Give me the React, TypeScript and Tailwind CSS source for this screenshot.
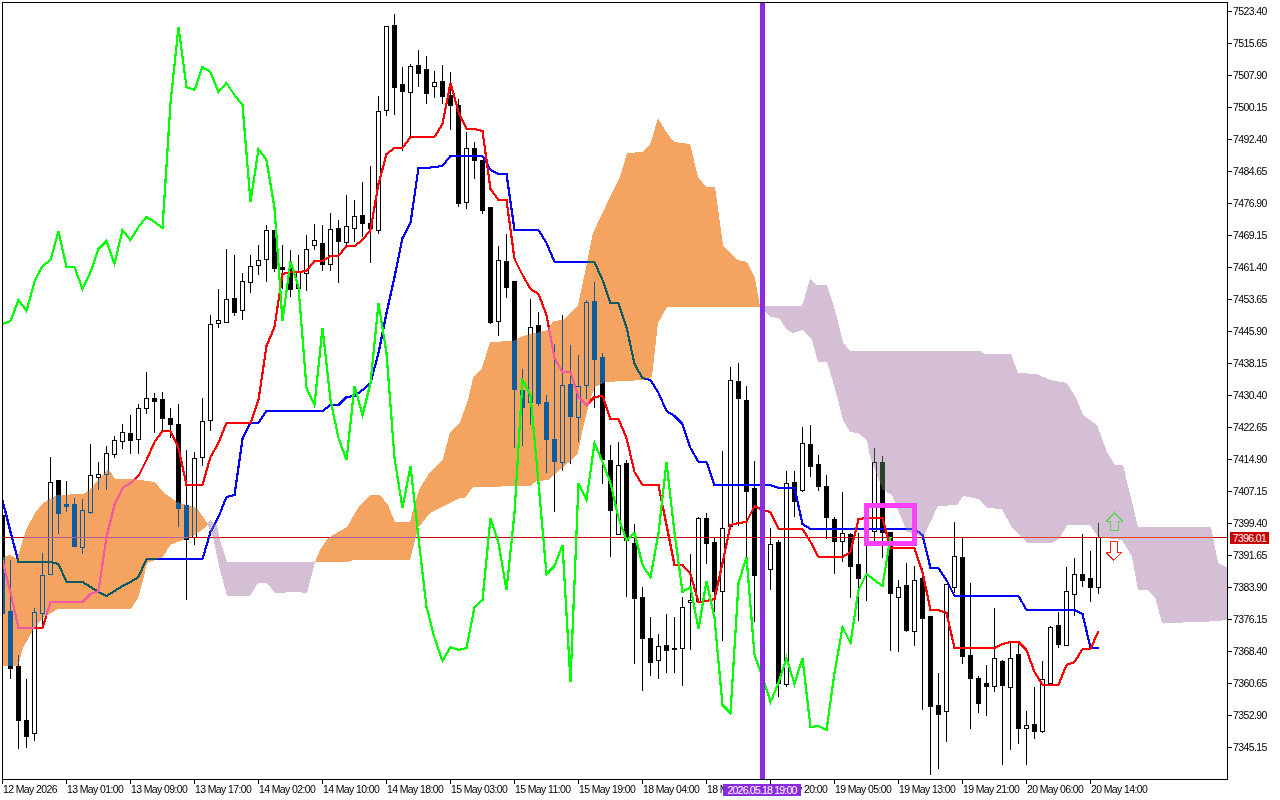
const candles: number[][] = [
  [515, 515, 613, 613, 0], [560, 611, 668, 678, 0], [655, 666, 720, 748, 0], [679, 720, 736, 747, 0],
  [608, 612, 733, 740, 1], [553, 575, 613, 627, 1], [457, 482, 574, 574, 1], [480, 480, 513, 533, 0],
  [481, 504, 506, 511, 0], [498, 504, 546, 546, 0], [499, 510, 547, 553, 1], [444, 475, 512, 513, 1],
  [462, 474, 477, 489, 1], [446, 453, 474, 489, 1], [436, 440, 454, 457, 1], [424, 432, 441, 448, 1],
  [415, 433, 440, 453, 0], [404, 408, 439, 453, 1], [372, 398, 408, 413, 1], [393, 398, 401, 432, 0],
  [392, 399, 418, 432, 0], [408, 418, 424, 437, 0], [404, 424, 508, 526, 0], [450, 505, 539, 599, 0],
  [452, 458, 537, 544, 1], [398, 421, 457, 465, 1], [315, 324, 420, 430, 1], [289, 320, 323, 327, 1],
  [249, 299, 322, 322, 1], [255, 298, 312, 315, 0], [273, 281, 310, 319, 1], [255, 266, 282, 292, 1],
  [245, 260, 265, 274, 1], [225, 230, 259, 281, 1], [230, 230, 268, 271, 0], [245, 267, 269, 288, 0],
  [250, 268, 289, 296, 0], [255, 272, 288, 289, 1], [235, 249, 273, 290, 1], [224, 240, 245, 249, 1],
  [225, 243, 264, 270, 0], [213, 229, 264, 270, 1], [220, 228, 241, 282, 0], [195, 226, 242, 245, 1],
  [200, 216, 228, 241, 1], [182, 215, 223, 236, 0], [166, 223, 228, 262, 0], [96, 111, 230, 233, 1],
  [26, 26, 110, 115, 1], [14, 25, 87, 114, 0], [67, 84, 91, 150, 0], [64, 66, 92, 135, 1],
  [50, 65, 73, 86, 0], [56, 69, 93, 103, 0], [71, 82, 86, 97, 1], [65, 81, 96, 103, 0],
  [72, 95, 105, 129, 0], [99, 105, 203, 206, 0], [132, 148, 202, 208, 1], [142, 148, 160, 178, 0],
  [160, 160, 210, 213, 0], [207, 207, 322, 323, 0], [246, 260, 321, 335, 1], [234, 261, 287, 297, 0],
  [281, 281, 389, 447, 0], [369, 390, 407, 445, 0], [299, 327, 402, 424, 1], [312, 325, 403, 405, 0],
  [395, 402, 439, 472, 0], [344, 439, 461, 511, 0], [315, 385, 462, 470, 1], [345, 384, 416, 463, 0],
  [355, 386, 417, 441, 1], [300, 302, 385, 398, 1], [282, 301, 359, 407, 0], [353, 357, 459, 483, 0],
  [445, 460, 510, 556, 0], [442, 465, 534, 534, 1], [460, 463, 540, 596, 0], [524, 543, 598, 663, 0],
  [587, 597, 638, 690, 0], [617, 638, 662, 675, 0], [634, 646, 660, 678, 1], [614, 645, 650, 672, 0],
  [617, 648, 649, 672, 0], [597, 607, 648, 685, 1], [554, 600, 602, 649, 1], [517, 518, 601, 601, 1],
  [513, 518, 543, 563, 0], [538, 542, 591, 611, 0], [451, 528, 591, 640, 1], [367, 380, 526, 526, 1],
  [363, 381, 398, 525, 0], [386, 400, 491, 565, 0], [461, 488, 575, 621, 0], [470, 480, 560, 600, 0],
  [528, 544, 569, 589, 1], [540, 542, 683, 696, 0], [471, 483, 684, 686, 1], [471, 482, 501, 516, 0],
  [427, 443, 490, 491, 1], [425, 444, 466, 476, 0], [455, 464, 486, 490, 0], [475, 486, 517, 538, 0],
  [517, 519, 541, 573, 0], [492, 533, 541, 561, 1], [533, 534, 566, 597, 0], [533, 564, 578, 620, 0],
  [533, 534, 540, 600, 0], [448, 462, 531, 540, 1], [456, 462, 532, 557, 0], [532, 532, 593, 650, 0],
  [580, 587, 597, 651, 1], [563, 585, 630, 631, 0], [566, 580, 631, 645, 1], [568, 578, 618, 709, 0],
  [616, 616, 706, 774, 0], [673, 705, 714, 768, 0], [584, 584, 711, 741, 1], [522, 556, 587, 592, 1],
  [537, 557, 656, 663, 0], [583, 655, 678, 728, 0], [676, 678, 703, 712, 0], [665, 683, 686, 715, 0],
  [608, 658, 686, 691, 1], [660, 661, 685, 764, 0], [642, 658, 687, 749, 1], [642, 654, 728, 743, 0],
  [711, 725, 728, 764, 1], [687, 724, 731, 738, 0], [661, 679, 731, 732, 1], [626, 627, 683, 685, 1],
  [612, 625, 644, 647, 0], [567, 591, 645, 645, 1], [558, 574, 594, 615, 1], [534, 574, 580, 586, 0],
  [551, 578, 587, 601, 0], [523, 537, 587, 593, 1],
]

const redLine = [
  560, 592, 628, 628, 628, 628, 602, 602, 602, 602, 602, 594, 591, 537, 505, 488, 483, 476, 460, 442,
  431, 431, 448, 485, 485, 485, 457, 443, 423, 423, 423, 423, 400, 346, 327, 274, 272, 272, 271, 261,
  261, 256, 256, 246, 246, 240, 230, 184, 154, 148, 148, 137, 137, 137, 137, 124, 83, 112, 129, 129,
  131, 189, 200, 200, 259, 275, 289, 294, 315, 358, 372, 372, 397, 405, 397, 396, 419, 419, 438, 472,
  485, 485, 485, 525, 565, 565, 574, 602, 601, 599, 563, 525, 523, 522, 506, 510, 512, 529, 529, 529,
  529, 542, 557, 557, 557, 557, 552, 519, 518, 518, 518, 548, 548, 548, 548, 572, 610, 610, 613, 648,
  648, 648, 648, 648, 648, 644, 642, 642, 650, 672, 685, 685, 685, 665, 662, 649, 649, 631,
]

const blueLine = [
  500, 532, 562, 562, 562, 562, 562, 564, 582, 582, 582, 587, 592, 596, 591, 586, 582, 577, 559, 559,
  559, 559, 559, 559, 559, 559, 532, 517, 497, 495, 439, 423, 423, 411, 411, 411, 411, 411, 411, 411,
  411, 405, 405, 397, 396, 390, 383, 353, 313, 277, 238, 223, 168, 168, 167, 166, 156, 156, 156, 156,
  156, 170, 174, 174, 230, 230, 230, 230, 243, 262, 262, 262, 262, 262, 262, 280, 303, 303, 327, 364,
  378, 380, 393, 411, 416, 424, 448, 462, 462, 485, 485, 485, 485, 485, 485, 485, 485, 488, 488, 488,
  524, 529, 529, 529, 529, 529, 529, 529, 529, 529, 529, 529, 529, 529, 529, 535, 568, 568, 580, 596,
  596, 596, 596, 596, 596, 596, 596, 596, 610, 610, 610, 610, 610, 610, 610, 614, 648, 648,
]

const greenLine = [
  324, 321, 300, 311, 282, 266, 260, 231, 267, 267, 289, 272, 249, 241, 264, 230, 240, 227, 217, 222,
  228, 103, 27, 87, 90, 67, 72, 92, 83, 95, 105, 202, 149, 160, 208, 321, 261, 287, 388, 405,
  328, 400, 438, 460, 386, 415, 383, 303, 353, 458, 508, 466, 538, 607, 638, 661, 647, 650, 648, 607,
  600, 518, 543, 590, 513, 380, 395, 483, 574, 566, 545, 682, 483, 500, 443, 462, 483, 518, 540, 533,
  565, 577, 533, 462, 533, 592, 587, 629, 581, 618, 705, 713, 583, 557, 655, 677, 702, 683, 658, 684,
  658, 727, 726, 730, 673, 627, 643, 590, 574, 580, 586, 537,
]

const orangeLeft = '3,557 10,555 17,559 22,543 27,528 35,513 43,503 57,495 83,494 90,490 98,480 107,470 110,471 115,479 133,479 155,482 163,492 177,502 197,508 203,517 207,523 207,526 195,535 183,540 170,545 163,557 147,563 143,580 138,598 131,609 58,609 43,618 33,630 23,648 18,666 3,666'
const lilacLeft = '207,524 210,520 217,525 220,540 227,562 315,562 307,593 297,592 275,593 267,583 258,583 250,596 227,596 220,570 213,537'
const orangeMain = '315,562 320,550 328,538 347,527 358,508 370,495 380,495 388,505 395,522 410,522 415,503 420,488 430,472 443,459 450,432 460,422 468,400 473,378 482,368 490,342 513,341 523,336 548,330 553,321 563,320 578,305 587,263 593,233 610,197 620,177 627,153 642,152 650,145 658,118 667,133 674,142 690,144 698,177 706,187 715,187 723,245 737,260 747,262 755,278 760,307 667,307 658,323 652,377 643,380 605,382 595,387 590,400 583,428 578,453 568,463 548,480 537,481 530,486 473,487 465,498 460,498 430,513 418,528 410,560 353,560 348,562'
const lilacMain = '760,306 802,306 810,279 817,285 827,285 833,303 838,322 843,342 850,351 980,351 985,354 1011,354 1018,373 1037,374 1050,380 1067,383 1077,400 1083,415 1097,425 1107,452 1115,465 1123,465 1138,527 1211,527 1218,563 1228,568 1228,620 1203,622 1162,623 1155,597 1147,590 1138,590 1132,557 1122,540 1098,537 1090,525 1067,525 1060,538 1052,543 1027,543 1012,528 1002,509 987,508 978,499 963,496 957,505 938,506 930,523 923,537 913,533 907,532 892,495 883,490 870,457 867,440 858,433 850,432 843,420 838,400 833,382 827,362 818,362 812,340 802,330 793,333 787,330 779,318 770,317 765,312 760,307'

const timeLabels = [
  '12 May 2026', '13 May 01:00', '13 May 09:00', '13 May 17:00', '14 May 02:00', '14 May 10:00',
  '14 May 18:00', '15 May 03:00', '15 May 11:00', '15 May 19:00', '18 May 04:00', '18 May 12:00',
  '18 May 20:00', '19 May 05:00', '19 May 13:00', '19 May 21:00', '20 May 06:00', '20 May 14:00',
]

const priceLabels = Array.from({ length: 24 }, (_, i) => (7523.4 - i * 7.75).toFixed(2))

const toPoints = (ys: number[]) => ys.map((y, i) => `${2.5 + i * 8},${y}`).join(' ')

function Candle({ c, i }: { c: number[]; i: number }) {
  const [high, top, bottom, low, bull] = c
  const x = 2 + i * 8
  return (
    <g>
      <rect x={x} y={high} width={1} height={low - high + 1} fill="#000" />
      <rect x={x - 2} y={top} width={5} height={bottom - top + 1} fill="#000" />
      {bull === 1 && bottom - top > 1 && (
        <rect x={x - 1} y={top + 1} width={3} height={bottom - top - 1} fill="#fff" />
      )}
    </g>
  )
}

export default function App() {
  return (
    <div className="relative h-[800px] w-[1280px] overflow-hidden bg-white font-['Liberation_Sans',sans-serif] text-[10.5px] leading-none tracking-[-0.62px] text-black">
      <div className="flex h-[780px]">
        <div className="ml-[2px] mt-[2px] h-[778px] w-[1226px] border border-black">
          <svg width={1224} height={776} viewBox="3 3 1224 776" shapeRendering="crispEdges" className="block">
            <defs>
              <clipPath id="lilac-area">
                <polygon points={lilacLeft} />
                <polygon points={lilacMain} />
              </clipPath>
            </defs>
            <rect x={0} y={0} width={1280} height={800} fill="#fff" />
            {candles.map((c, i) => (
              <Candle key={i} c={c} i={i} />
            ))}
            <rect x={3} y={537} width={1224} height={1} fill="#C00000" />
            <polyline points={toPoints(blueLine)} fill="none" stroke="#0000FF" strokeWidth={2.2} />
            <polyline points={toPoints(redLine)} fill="none" stroke="#FF0000" strokeWidth={2.2} />

            {/* clouds are xor-drawn by the terminal, difference gives the same colours */}
            <polygon points={orangeLeft} fill="#0B5B9F" className="mix-blend-difference" />
            <polygon points={orangeMain} fill="#0B5B9F" className="mix-blend-difference" />
            <polygon points={lilacLeft} fill="#2A4028" className="mix-blend-difference" />
            <polygon points={lilacMain} fill="#2A4028" className="mix-blend-difference" />
            <rect x={3} y={537} width={1224} height={1} fill="#EA4028" clipPath="url(#lilac-area)" />

            <polyline points={toPoints(greenLine)} fill="none" stroke="#00FF00" strokeWidth={2.2} />
            <rect x={866.5} y={505.5} width={48} height={38} fill="none" stroke="#FF40F8" strokeWidth={5} />
            <rect x={760} y={3} width={5} height={776} fill="#8A2BE2" />

            <polygon points="1114.5,512.5 1122.5,521.5 1118.5,521.5 1118.5,530.5 1110.5,530.5 1110.5,521.5 1106.5,521.5" fill="none" stroke="#55D455" strokeWidth={1.4} />
            <polygon points="1110.5,541.5 1117.5,541.5 1117.5,552.5 1121.5,552.5 1113.5,560.5 1106.5,552.5 1110.5,552.5" fill="#fff" fillOpacity={0.35} stroke="#FF2020" strokeWidth={1.4} />
          </svg>
        </div>
        <div className="flex w-[52px] flex-col pt-[11px]">
          {priceLabels.map(p => (
            <div key={p} className="flex h-8 shrink-0 items-start">
              <div className="h-px w-1 bg-black" />
              <span className="-mt-[5px] ml-px">{p}</span>
            </div>
          ))}
        </div>
      </div>

      <div className="ml-[2px] grid grid-cols-[repeat(18,64px)]">
        {timeLabels.map(t => (
          <div key={t}>
            <div className="h-1 w-px bg-black" />
            <div className="whitespace-nowrap pl-px">{t}</div>
          </div>
        ))}
      </div>

      {/* labels that sit over the axes */}
      <div className="absolute left-[723px] top-[784px] flex h-[12px] w-[78px] items-center justify-center bg-[#8A2BE2] tracking-[-0.8px] text-white">
        2026.05.18 19:00
      </div>
      <div className="absolute left-[1230px] top-[532px] flex h-[12px] w-[39px] items-center justify-center bg-[#C80000] text-white">
        7396.01
      </div>
    </div>
  )
}
